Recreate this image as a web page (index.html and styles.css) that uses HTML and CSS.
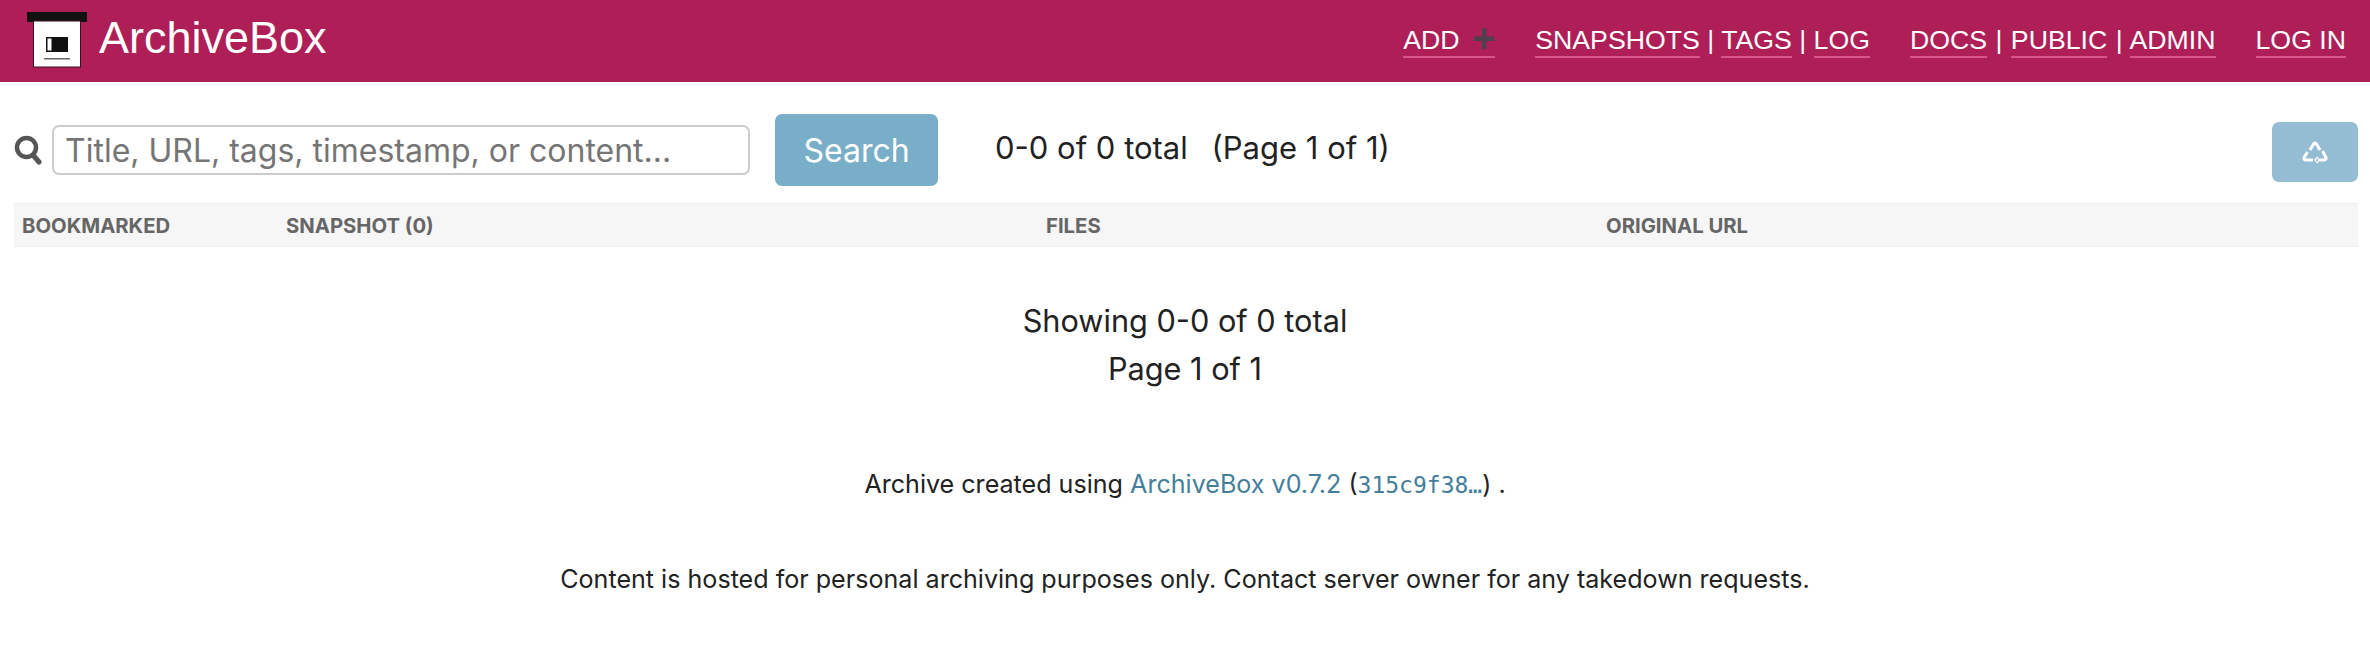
FILE: index.html
```html
<!DOCTYPE html>
<html lang="en">
<head>
  <meta charset="UTF-8" />
  <title>Snapshots | ArchiveBox</title>
  <link rel="stylesheet" href="styles.css">
</head>
<body>

  <!-- Header -->
  <header class="header">
    <a class="branding" href="#">
      <svg class="logo" viewBox="0 0 60 56" width="60" height="56">
        <rect x="0" y="0" width="60" height="10" rx="1" fill="#111"/>
        <rect x="6.5" y="9" width="47" height="46" fill="#fff" stroke="#3a1020" stroke-width="1"/>
        <rect x="19" y="25" width="22" height="15" fill="#111"/>
        <rect x="20.5" y="26.5" width="4" height="12" fill="#fff"/>
        <rect x="17" y="46" width="26" height="1.5" fill="#666"/>
      </svg>
      <span class="brand-name">ArchiveBox</span>
    </a>
    <nav class="nav">
      <div class="nav-group"><a href="#">ADD <span class="plus">+</span></a></div>
      <div class="nav-group"><a href="#">SNAPSHOTS</a> | <a href="#">TAGS</a> | <a href="#">LOG</a></div>
      <div class="nav-group nav-group-wide"><a href="#">DOCS</a> | <a href="#">PUBLIC</a> | <a href="#">ADMIN</a></div>
      <div class="nav-group"><a href="#">LOG IN</a></div>
    </nav>
  </header>

  <!-- Search and paging -->
  <div class="toolbar">
    <svg class="search-icon" viewBox="0 0 28 30" width="28" height="30">
      <circle cx="12.5" cy="12.5" r="9.5" fill="none" stroke="#555" stroke-width="4.5"/>
      <path d="M19 20 L25 27" stroke="#555" stroke-width="5" stroke-linecap="round"/>
    </svg>
    <input class="search-input" type="text" placeholder="Title, URL, tags, timestamp, or content...">
    <button class="search-btn" type="button">Search</button>
    <div class="paging">0-0 of 0 total <span class="page-of">(Page 1 of 1)</span></div>
    <button class="recycle-btn" type="button">
      <svg viewBox="0 0 26 26" width="26" height="26" fill="none" stroke="#fff" stroke-width="3">
        <path d="M8 11 L11.5 5 Q13 3 14.500 5 L18 11"/>
        <path d="M20.500 12 L24 18.500 Q24.500 21 22 21 L16 21"/>
        <path d="M11 21 L4 21 Q1.500 21 2 18.500 L5.500 13"/>
        <path d="M16 18 L13 21 L16 24" stroke-width="1.5"/>
      </svg>
    </button>
  </div>

  <!-- Results -->
  <table class="results">
    <thead>
      <tr>
        <th class="col-bookmarked">BOOKMARKED</th>
        <th class="col-snapshot">SNAPSHOT (0)</th>
        <th class="col-files">FILES</th>
        <th>ORIGINAL URL</th>
      </tr>
    </thead>
  </table>

  <div class="summary">
    <p>Showing 0-0 of 0 total</p>
    <p>Page 1 of 1</p>
  </div>

  <footer class="footer">
    <p>Archive created using <a href="#">ArchiveBox v0.7.2</a> (<a class="hash" href="#">315c9f38…</a>) .</p>
    <p>Content is hosted for personal archiving purposes only. Contact server owner for any takedown requests.</p>
  </footer>

</body>
</html>
```

FILE: styles.css
```css
body {
  margin: 0;
  padding: 0;
  height: 648px;
  overflow: hidden;
  font-family: 'Inter', 'Liberation Sans', sans-serif;
  background: #fff;
  color: #222;
}

a {
  color: inherit;
  text-decoration: none;
}

.header {
  display: flex;
  align-items: center;
  height: 82px;
  padding: 0 24px 0 27px;
  background: #ae1e57;
  color: #fff;
}

.branding {
  display: flex;
  align-items: center;
  gap: 12px;
  margin-top: -2px;
}

.brand-name {
  margin-top: -5px;
  font-family: 'Liberation Sans', sans-serif;
  font-size: 45px;
}

.nav {
  display: flex;
  gap: 40px;
  margin-left: auto;
  margin-top: -2px;
  font-family: 'Liberation Sans', sans-serif;
  font-size: 26.7px;
}

.nav a {
  padding-bottom: 1px;
  border-bottom: 2px solid #d9568c;
}

.nav-group-wide {
  word-spacing: 1px;
}

.plus {
  display: inline-block;
  margin-left: 5px;
  line-height: 0;
  vertical-align: -3px;
  font-size: 40px;
  font-weight: 700;
  color: #4f4050;
}

.toolbar {
  display: flex;
  align-items: center;
  box-sizing: border-box;
  height: 120px;
  padding: 16px 12px 0 14px;
}

.search-icon {
  margin-right: 10px;
}

.search-input {
  width: 698px;
  height: 50px;
  box-sizing: border-box;
  padding: 0 11px;
  border: 2px solid #ccc;
  border-radius: 7px;
  outline: none;
  font-family: inherit;
  font-size: 32px;
}

.search-input::placeholder {
  color: #757575;
}

.search-btn {
  width: 163px;
  height: 72px;
  margin-left: 25px;
  border: none;
  border-radius: 7px;
  background: #79aec8;
  color: #fff;
  font-family: inherit;
  font-size: 32px;
}

.paging {
  margin-left: 57px;
  margin-top: -6px;
  font-size: 31px;
}

.page-of {
  margin-left: 15px;
}

.recycle-btn {
  display: flex;
  align-items: center;
  justify-content: center;
  width: 86px;
  height: 60px;
  margin-left: auto;
  margin-top: 4px;
  border: none;
  border-radius: 7px;
  background: #94bdd3;
}

.results {
  width: calc(100% - 26px);
  margin: 1px 12px 0 14px;
  border-collapse: collapse;
  table-layout: fixed;
  background: #f6f6f6;
  border-top: 1px solid #eee;
  border-bottom: 1px solid #eee;
}

.results th {
  height: 42px;
  padding: 0 8px;
  text-align: left;
  font-size: 20.3px;
  color: #666;
}

.col-bookmarked {
  width: 248px;
}

.col-snapshot {
  width: 744px;
}

.col-files {
  width: 544px;
}

.summary {
  margin-top: 50px;
  text-align: center;
  font-size: 30.7px;
}

.summary p {
  margin: 0;
  line-height: 48px;
}

.footer {
  margin-top: 76px;
  text-align: center;
  font-size: 25.1px;
}

.footer p {
  margin: 0 0 64px;
  line-height: 30px;
}

.footer a {
  color: #447e9b;
}

.hash {
  font-family: 'DejaVu Sans Mono', monospace;
  font-size: 23px;
}
```
